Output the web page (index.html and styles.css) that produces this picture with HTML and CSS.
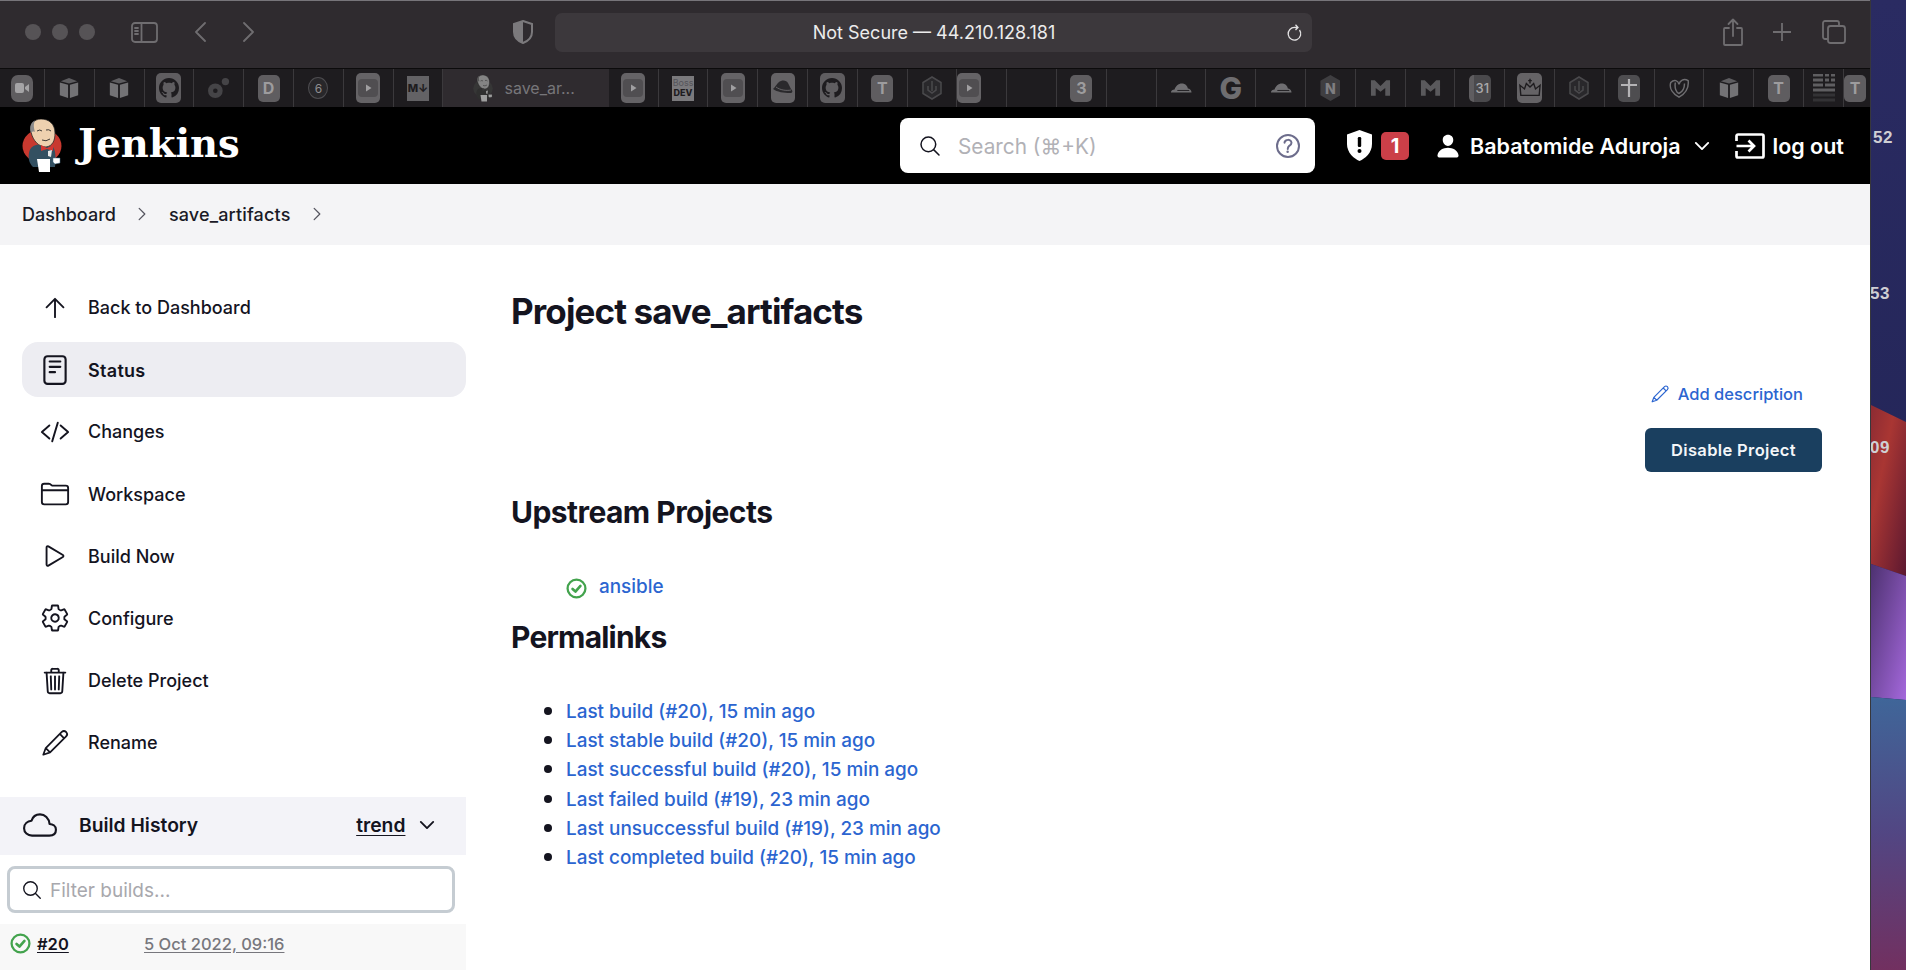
FILE: index.html
```html
<!DOCTYPE html>
<html lang="en">
<head>
<meta charset="utf-8">
<title>save_artifacts - Jenkins</title>
<link rel="stylesheet" href="styles.css">
</head>
<body>
<svg class="defs" width="0" height="0" aria-hidden="true">
  <defs>
    <symbol id="i-box" viewBox="0 0 24 24"><path d="M12 1 21 4.500 12 7 3 4.500z" fill="#5e5d60"/><path d="M2 6 11 8.500V23L2 20z" fill="#737275"/><path d="M22 6 13 8.500V23L22 20z" fill="#737275"/></symbol>
    <symbol id="i-gh" viewBox="0 0 16 16"><path fill="currentColor" d="M8 0C3.580 0 0 3.580 0 8c0 3.540 2.290 6.530 5.470 7.590.4.070.55-.17.55-.38 0-.19-.01-.82-.01-1.490-2.010.37-2.530-.49-2.690-.94-.09-.23-.48-.94-.82-1.130-.28-.15-.68-.52-.01-.53.63-.01 1.080.58 1.230.82.72 1.210 1.870.87 2.330.66.07-.52.28-.87.51-1.070-1.780-.2-3.640-.89-3.640-3.950 0-.87.31-1.590.82-2.150-.08-.2-.36-1.020.08-2.120 0 0 .67-.21 2.200.82.64-.18 1.320-.27 2-.27.68 0 1.360.09 2 .27 1.530-1.040 2.200-.82 2.200-.82.44 1.100.16 1.920.08 2.120.51.56.82 1.270.82 2.150 0 3.070-1.870 3.750-3.650 3.950.29.25.54.73.54 1.480 0 1.070-.01 1.930-.01 2.200 0 .21.15.46.55.38A8.013 8.013 0 0016 8c0-4.420-3.580-8-8-8z"/></symbol>
    <symbol id="i-yt" viewBox="0 0 24 30"><rect width="24" height="30" rx="5" fill="#656366"/><rect x="2" y="6" width="20" height="18" rx="4" fill="#504e51"/><path d="M10 11.500 15.500 15 10 18.500z" fill="#a09fa1"/></symbol>
    <symbol id="i-hex" viewBox="0 0 20 24"><path d="M10 1 19 6.500V17.500L10 23 1 17.500V6.500z" fill="#29282b" stroke="#4a494c" stroke-width="1.500"/><path d="M10 5V15M6 10V14L10 17 14 14V10" fill="none" stroke="#4a494c" stroke-width="1.500"/></symbol>
    <symbol id="i-cloudflare" viewBox="0 0 24 12"><path d="M1 11C1 8.500 3 7.500 5 7.500 6 4 9 1 13 1 16.500 1 19 3.500 19.500 6.500 21.500 6.500 23.500 8.500 23.500 11z" fill="#6f6e71"/><path d="M8 8.700H21" stroke="#1e1c1f" stroke-width="1"/></symbol>
    <symbol id="i-m" viewBox="0 0 22 18"><path d="M1 17V1H5L11 7 17 1H21V17H16V9L11 13 6 9V17z" fill="#5a595c"/></symbol>

    <symbol id="i-logo" viewBox="0 0 40 54">
      <ellipse cx="20" cy="27" rx="19.500" ry="17" fill="#c8392f"/>
      <path d="M7 34C8 27 14 25 19 26L30 27C34 30 34 40 33 48H11C7 44 6 39 7 34z" fill="#335061"/>
      <path d="M9 13C7 6 12 0 19 0 27 0 33 5 33 14 33 21 31 27 24 28 17 28 11 22 9 13z" fill="#eed1af" stroke="#2b2a28" stroke-width=".8"/>
      <path d="M9 14C7 8 9 3 13 1.500 11 6 12 9 13 13 11 12 10 13 9 14z" fill="#8b8b8b"/>
      <path d="M15 12Q18 10 20 12M24 11Q27 10 29 12M20 21Q24 23 28 20" fill="none" stroke="#2b2a28" stroke-width=".9"/>
      <path d="M19 26 25 29 31 26 31 32 25 30 19 32z" fill="#d33833"/>
      <path d="M26 32 30 31 29 38 26 37z" fill="#e8e8e8"/>
      <path d="M15 40H28L28 53H17z" fill="#fff"/>
      <path d="M31 39H38V44L33 45 31 43z" fill="#fff" stroke="#49728b" stroke-width=".5"/>
    </symbol>

    <symbol id="i-up" viewBox="0 0 512 512"><path d="M112 244l144-144 144 144M256 120v292" class="ln"/></symbol>
    <symbol id="i-reader" viewBox="0 0 512 512"><rect x="96" y="48" width="320" height="416" rx="48" ry="48" class="ln"/><path d="M176 128h160M176 208h160M176 288h80" class="ln"/></symbol>
    <symbol id="i-code" viewBox="0 0 512 512"><path d="M160 368L32 256l128-112M352 368l128-112-128-112M304 96l-96 320" class="ln"/></symbol>
    <symbol id="i-folder" viewBox="0 0 512 512"><path d="M440 432H72a40 40 0 01-40-40V120a40 40 0 0140-40h75.890a40 40 0 0122.190 6.720l27.840 18.560a40 40 0 0022.190 6.720H440a40 40 0 0140 40v240a40 40 0 01-40 40zM32 192h448" class="ln"/></symbol>
    <symbol id="i-play" viewBox="0 0 512 512"><path d="M112 111v290c0 17.440 17 28.520 31 20.160l247.900-148.370c12.120-7.250 12.120-26.330 0-33.580L143 90.840c-14-8.360-31 2.720-31 20.160z" class="ln"/></symbol>
    <symbol id="i-gear" viewBox="0 0 512 512"><path d="M262.290 192.310a64 64 0 1057.400 57.400 64.130 64.130 0 00-57.400-57.400zM416.390 256a154.340 154.340 0 01-1.530 20.790l45.210 35.460a10.810 10.810 0 012.450 13.750l-42.770 74a10.810 10.810 0 01-13.140 4.590l-44.900-18.080a16.110 16.110 0 00-15.170 1.750A164.480 164.480 0 01325 400.800a15.940 15.940 0 00-8.820 12.140l-6.730 47.890a11.080 11.080 0 01-10.680 9.170h-85.540a11.110 11.110 0 01-10.690-8.870l-6.720-47.820a16.070 16.070 0 00-9-12.220 155.300 155.300 0 01-21.460-12.570 16 16 0 00-15.110-1.710l-44.890 18.070a10.810 10.810 0 01-13.140-4.580l-42.770-74a10.800 10.800 0 012.450-13.750l38.210-30a16.050 16.050 0 006-14.080c-.36-4.170-.58-8.330-.58-12.500s.21-8.270.58-12.350a16 16 0 00-6.070-13.940l-38.190-30A10.810 10.810 0 0149.480 186l42.770-74a10.810 10.810 0 0113.140-4.590l44.900 18.080a16.110 16.110 0 0015.170-1.750A164.480 164.480 0 01187 111.200a15.940 15.940 0 008.820-12.140l6.730-47.890A11.080 11.080 0 01213.230 42h85.540a11.110 11.110 0 0110.690 8.870l6.720 47.820a16.070 16.070 0 009 12.220 155.300 155.300 0 0121.460 12.570 16 16 0 0015.110 1.710l44.890-18.070a10.810 10.810 0 0113.140 4.580l42.770 74a10.800 10.800 0 01-2.450 13.750l-38.210 30a16.050 16.050 0 00-6.050 14.080c.33 4.140.55 8.300.55 12.470z" class="ln"/></symbol>
    <symbol id="i-trash" viewBox="0 0 512 512"><path d="M112 112l20 320c.95 18.490 14.400 32 32 32h184c17.670 0 30.870-13.510 32-32l20-320M80 112h352M192 112V72h0a23.930 23.930 0 0124-24h80a23.930 23.930 0 0124 24h0v40M256 176v224M184 176l8 224M328 176l-8 224" class="ln"/></symbol>
    <symbol id="i-pencil" viewBox="0 0 512 512"><path d="M56 456 98 342 372 68Q408 34 446 68 482 106 446 142L172 416zM98 342 172 416M338 102 412 176" class="ln-thin"/></symbol>
    <symbol id="i-cloud" viewBox="0 0 512 512"><path d="M400 240c-8.890-89.540-71-144-144-144-69 0-113.440 48.200-128 96-60 6-112 43.590-112 112 0 66 54 112 120 112h260c55 0 100-27.440 100-88 0-59.820-53-85.760-96-88z" class="ln"/></symbol>
    <symbol id="i-chev" viewBox="0 0 512 512"><path d="M112 184l144 144 144-144" class="ln-bold"/></symbol>
    <symbol id="i-chev-r" viewBox="0 0 512 512"><path d="M184 112l144 144-144 144" class="ln"/></symbol>
    <symbol id="i-search" viewBox="0 0 512 512"><path d="M221.090 64a157.090 157.090 0 10157.090 157.090A157.100 157.100 0 00221.090 64zM338.290 338.290L448 448" class="ln"/></symbol>
    <symbol id="i-help" viewBox="0 0 512 512"><path d="M256 80a176 176 0 10176 176A176 176 0 00256 80zM200 202.290s.84-17.500 19.570-32.570C230.680 160.770 244 158.180 256 158c10.930-.14 20.690 1.670 26.530 4.450 10 4.760 29.470 16.380 29.470 41.090 0 26-17 37.810-36.370 50.800S252 287.640 252 304" class="ln"/><circle cx="250" cy="348" r="20" fill="currentColor"/></symbol>
    <symbol id="i-person" viewBox="0 0 512 512"><path fill="currentColor" d="M332.640 64.580C313.180 43.570 286 32 256 32c-30.160 0-57.430 11.500-76.800 32.380-19.580 21.110-29.120 49.800-26.880 80.780C156.760 206.280 203.270 256 256 256s99.160-49.710 103.670-110.820c2.270-30.700-7.330-59.330-27.030-80.600zM432 480H80a31 31 0 01-24.200-11.130c-6.500-7.770-9.120-18.380-7.180-29.110C57.060 392.940 83.400 353.610 124.800 326c36.780-24.510 83.370-38 131.200-38s94.420 13.500 131.200 38c41.400 27.600 67.740 66.930 76.180 113.750 1.940 10.730-.68 21.340-7.180 29.110A31 31 0 01432 480z"/></symbol>
    <symbol id="i-check" viewBox="0 0 24 24"><circle cx="12" cy="12" r="10.200" fill="none" stroke="currentColor" stroke-width="2.600"/><path d="M7.500 12.500 10.800 15.500 16.500 9" fill="none" stroke="currentColor" stroke-width="3" stroke-linecap="round" stroke-linejoin="round"/></symbol>
  </defs>
</svg>

<div class="desktop">
  <div class="window">
    <div class="titlebar">
      <div class="lights"><span class="light"></span><span class="light"></span><span class="light"></span></div>
      <svg class="tb-sidebar" viewBox="0 0 27 21"><rect x="1" y="1" width="25" height="19" rx="3" class="tb-ln"/><path d="M10.500 1V20M4 6H7M4 9H7M4 12H7" class="tb-ln"/></svg>
      <svg class="tb-back" viewBox="0 0 12 20"><path d="M11 1 2 10 11 19" class="tb-ln"/></svg>
      <svg class="tb-forward" viewBox="0 0 12 20"><path d="M1 1 10 10 1 19" class="tb-ln"/></svg>
      <svg class="tb-shield" viewBox="0 0 20 24"><path d="M10 1 19 4V12C19 18 14 21.500 10 23 6 21.500 1 18 1 12V4z" fill="none" stroke="#7b797c" stroke-width="2"/><path d="M10 1 1 4V12C1 18 6 21.500 10 23z" fill="#7b797c"/></svg>
      <div class="urlbar">
        <span class="url-text">Not Secure — 44.210.128.181</span>
        <svg class="url-reload" viewBox="0 0 16 18"><path d="M12.500 6A6.300 6.300 0 1 1 8 3.500H10.500M8.500 .8 11 3.500 8.500 6" fill="none" stroke="#e2e1e2" stroke-width="1.300"/></svg>
      </div>
      <div class="tb-actions">
        <svg class="tb-share" viewBox="0 0 20 28"><path d="M6 10H2A1 1 0 0 0 1 11V26A1 1 0 0 0 2 27H18A1 1 0 0 0 19 26V11A1 1 0 0 0 18 10H14M10 18V1.500M5.500 6 10 1.500 14.500 6" class="tb-ln"/></svg>
        <svg class="tb-plus" viewBox="0 0 18 18"><path d="M9 0V18M0 9H18" class="tb-ln"/></svg>
        <svg class="tb-tabs" viewBox="0 0 24 24"><path d="M5 19H3A2 2 0 0 1 1 17V3A2 2 0 0 1 3 1H15A2 2 0 0 1 17 3V5" class="tb-ln"/><rect x="6" y="6" width="17" height="17" rx="2.500" class="tb-ln"/></svg>
      </div>
    </div>

    <div class="tabbar">
      <div class="tab tab-first"><span class="fav fav-zoom"><svg viewBox="0 0 14 10" class="fav-cam"><rect width="9" height="10" rx="2" fill="#a5a4a6"/><path d="M10 4 14 1V9L10 6z" fill="#a5a4a6"/></svg></span></div>
      <div class="tab"><svg class="ico-24"><use href="#i-box"/></svg></div>
      <div class="tab"><svg class="ico-24"><use href="#i-box"/></svg></div>
      <div class="tab"><span class="fav fav-gh"><svg class="ico-gh"><use href="#i-gh"/></svg></span></div>
      <div class="tab"><svg class="ico-24" viewBox="0 0 24 24"><circle cx="8" cy="15" r="8" fill="#454447"/><circle cx="8" cy="15" r="2.500" fill="#1e1c1f"/><circle cx="19" cy="5" r="4" fill="#454447"/></svg></div>
      <div class="tab"><span class="fav fav-letter">D</span></div>
      <div class="tab"><span class="fav-ring">6</span></div>
      <div class="tab"><svg class="ico-yt"><use href="#i-yt"/></svg></div>
      <div class="tab"><span class="fav-md">M↓</span></div>
      <div class="tab tab-active"><svg class="ico-logo-tab"><use href="#i-logo"/></svg><span class="tab-title">save_ar...</span></div>
      <div class="tab"><svg class="ico-yt"><use href="#i-yt"/></svg></div>
      <div class="tab"><span class="fav-dev"><span class="dev-top">Boss</span><span class="dev-bot">DEV</span></span></div>
      <div class="tab"><svg class="ico-yt"><use href="#i-yt"/></svg></div>
      <div class="tab"><svg class="ico-yt" viewBox="0 0 24 30"><rect width="24" height="30" rx="5" fill="#656366"/><path d="M2 16C5 14 6 9 10 8 13 7 16 8 17 10L20 16C22 18 22 20 19 20 13 20 6 19 2 16z" fill="#2a292c"/><path d="M5 14C9 17 15 18 20 17" fill="none" stroke="#656366" stroke-width="1"/></svg></div>
      <div class="tab"><span class="fav fav-gh"><svg class="ico-gh"><use href="#i-gh"/></svg></span></div>
      <div class="tab"><span class="fav fav-letter">T</span></div>
      <div class="tab"><svg class="ico-hex"><use href="#i-hex"/></svg></div>
      <div class="tab tab-left"><svg class="ico-yt"><use href="#i-yt"/></svg></div>
      <div class="tab"></div>
      <div class="tab"><span class="fav fav-letter">3</span></div>
      <div class="tab"></div>
      <div class="tab"><svg class="ico-cf"><use href="#i-cloudflare"/></svg></div>
      <div class="tab"><span class="fav-g">G</span></div>
      <div class="tab"><svg class="ico-cf"><use href="#i-cloudflare"/></svg></div>
      <div class="tab"><span class="fav-n">N</span></div>
      <div class="tab"><svg class="ico-m"><use href="#i-m"/></svg></div>
      <div class="tab"><svg class="ico-m"><use href="#i-m"/></svg></div>
      <div class="tab"><span class="fav fav-cal">31</span></div>
      <div class="tab"><span class="fav-crown"><svg viewBox="0 0 24 20" class="crown"><path d="M2 18 1 7 6 11 8 5 12 9 16 5 18 11 23 7 22 18zM12 0V5M10 2H14" fill="none" stroke="#1e1c1f" stroke-width="1.500"/></svg></span></div>
      <div class="tab"><svg class="ico-hex"><use href="#i-hex"/></svg></div>
      <div class="tab"><span class="fav fav-cross"><svg viewBox="0 0 16 18" class="cross"><path d="M0 6H16M8 0V18" stroke="#b5b4b6" stroke-width="2.200"/></svg></span></div>
      <div class="tab"><svg class="ico-24" viewBox="0 0 24 24"><path d="M12 22C5 18 1 12 3 6 7 2 11 4 12 8 13 4 17 1 22 4 23 12 19 18 12 22zM8 6C7 12 9 17 12 18 16 16 18 11 18 7" fill="none" stroke="#6f6e71" stroke-width="1.600"/></svg></div>
      <div class="tab"><svg class="ico-24"><use href="#i-box"/></svg></div>
      <div class="tab"><span class="fav fav-letter">T</span></div>
      <div class="tab tab-grid"><svg class="ico-grid" viewBox="0 0 22 28"><path d="M0 1H10M12 1H16M18 1H22M0 6H10M12 6H16M18 6H22M0 11H10M12 11H22M0 16H22" stroke="#5f5e61" stroke-width="3"/><path d="M0 21H22M0 26H22" stroke="#333235" stroke-width="3"/></svg></div>
      <div class="tab tab-last"><span class="fav fav-letter">T</span></div>
    </div>

    <header class="jheader">
      <div class="brand">
        <svg class="brand-logo"><use href="#i-logo"/></svg>
        <span class="brand-name">Jenkins</span>
      </div>
      <div class="searchbox">
        <svg class="search-ico"><use href="#i-search"/></svg>
        <span class="search-ph">Search (⌘+K)</span>
        <svg class="help-ico"><use href="#i-help"/></svg>
      </div>
      <div class="alerts">
        <svg class="alert-shield" viewBox="0 0 25 31"><path fill="#fff" d="M12.500 0 25 4.500V14C25 23 18 28.500 12.500 31 7 28.500 0 23 0 14V4.500z"/><rect x="10.800" y="7" width="3.400" height="10" rx="1.200" fill="#000"/><circle cx="12.500" cy="21" r="2" fill="#000"/></svg>
        <span class="alert-badge">1</span>
      </div>
      <div class="userbox">
        <svg class="user-ico"><use href="#i-person"/></svg>
        <span class="user-name">Babatomide Aduroja</span>
        <svg class="user-chev"><use href="#i-chev"/></svg>
      </div>
      <div class="logout">
        <svg class="logout-ico" viewBox="0 0 30 26"><path d="M1.500 8V3A1.500 1.500 0 0 1 3 1.500H27A1.500 1.500 0 0 1 28.500 3V23A1.500 1.500 0 0 1 27 24.500H3A1.500 1.500 0 0 1 1.500 23V18M1.500 13H19M13.500 7.500 19 13 13.500 18.500" fill="none" stroke="#fff" stroke-width="2.700"/></svg>
        <span class="logout-text">log out</span>
      </div>
    </header>

    <nav class="breadcrumb">
      <span class="crumb">Dashboard</span>
      <svg class="crumb-sep"><use href="#i-chev-r"/></svg>
      <span class="crumb crumb-job">save_artifacts</span>
      <svg class="crumb-sep"><use href="#i-chev-r"/></svg>
    </nav>

    <div class="page">
      <aside class="side">
        <ul class="tasks">
          <li class="task"><svg class="task-ico"><use href="#i-up"/></svg><span>Back to Dashboard</span></li>
          <li class="task task-on"><svg class="task-ico task-ico-doc"><use href="#i-reader"/></svg><span class="task-label-on">Status</span></li>
          <li class="task"><svg class="task-ico"><use href="#i-code"/></svg><span>Changes</span></li>
          <li class="task"><svg class="task-ico"><use href="#i-folder"/></svg><span>Workspace</span></li>
          <li class="task"><svg class="task-ico"><use href="#i-play"/></svg><span>Build Now</span></li>
          <li class="task"><svg class="task-ico"><use href="#i-gear"/></svg><span>Configure</span></li>
          <li class="task"><svg class="task-ico"><use href="#i-trash"/></svg><span>Delete Project</span></li>
          <li class="task"><svg class="task-ico"><use href="#i-pencil"/></svg><span>Rename</span></li>
        </ul>
        <div class="bh-head">
          <svg class="bh-cloud"><use href="#i-cloud"/></svg>
          <span class="bh-title">Build History</span>
          <span class="bh-trend">trend</span>
          <svg class="bh-chev"><use href="#i-chev"/></svg>
        </div>
        <div class="bh-filter">
          <svg class="bh-search"><use href="#i-search"/></svg>
          <span class="bh-ph">Filter builds...</span>
        </div>
        <div class="bh-row">
          <svg class="bh-ok"><use href="#i-check"/></svg>
          <span class="bh-num">#20</span>
          <span class="bh-date">5 Oct 2022, 09:16</span>
        </div>
      </aside>

      <main class="main">
        <h1 class="title">Project save_artifacts</h1>
        <div class="actions">
          <a class="add-desc"><svg class="add-ico"><use href="#i-pencil"/></svg>Add description</a>
          <button class="btn-disable">Disable Project</button>
        </div>
        <h2 class="sub sub-up">Upstream Projects</h2>
        <div class="upstream"><svg class="up-ok"><use href="#i-check"/></svg><a class="link">ansible</a></div>
        <h2 class="sub sub-perma">Permalinks</h2>
        <ul class="permalinks">
          <li><a class="link">Last build (#20), 15 min ago</a></li>
          <li><a class="link">Last stable build (#20), 15 min ago</a></li>
          <li><a class="link">Last successful build (#20), 15 min ago</a></li>
          <li><a class="link">Last failed build (#19), 23 min ago</a></li>
          <li><a class="link">Last unsuccessful build (#19), 23 min ago</a></li>
          <li><a class="link">Last completed build (#20), 15 min ago</a></li>
        </ul>
      </main>
    </div>
  </div>

  <div class="wallpaper">
    <svg class="wall-art" viewBox="0 0 36 970" preserveAspectRatio="none">
      <defs>
        <linearGradient id="w-navy" x1="0" y1="0" x2="0" y2="1"><stop offset="0" stop-color="#2a2b62"/><stop offset="1" stop-color="#1e2150"/></linearGradient>
        <linearGradient id="w-red" x1="0" y1="0" x2="1" y2="1"><stop offset="0" stop-color="#8c2b33"/><stop offset=".35" stop-color="#a93633"/><stop offset="1" stop-color="#5c1830"/></linearGradient>
        <linearGradient id="w-purple" x1="0" y1="0" x2="1" y2="1"><stop offset="0" stop-color="#4d3170"/><stop offset="1" stop-color="#a468dc"/></linearGradient>
        <linearGradient id="w-blue" x1="0" y1="0" x2="0" y2="1"><stop offset="0" stop-color="#3f6699"/><stop offset=".5" stop-color="#524683"/><stop offset="1" stop-color="#723060"/></linearGradient>
      </defs>
      <rect width="36" height="970" fill="url(#w-navy)"/>
      <path d="M0 405 36 422V576L0 564z" fill="url(#w-red)"/>
      <path d="M0 564 36 576V700L0 697z" fill="url(#w-purple)"/>
      <path d="M0 697 36 700V970H0z" fill="url(#w-blue)"/>
    </svg>
    <span class="wall-num wall-52">52</span>
    <span class="wall-num wall-53">53</span>
    <span class="wall-num wall-09">09</span>
  </div>
</div>
</body>
</html>
```

FILE: styles.css
```css
* { box-sizing: border-box; }
html, body { margin: 0; padding: 0; height: 100%; overflow: hidden; }
body { font-family: Inter, "Liberation Sans", sans-serif; background: #1e2150; color: #14141f; }
.defs { display: block; height: 0; width: 0; }
.ln { fill: none; stroke: currentColor; stroke-width: 32; stroke-linecap: round; stroke-linejoin: round; }
.ln-thin { fill: none; stroke: currentColor; stroke-width: 30; stroke-linecap: round; stroke-linejoin: round; }
.ln-bold { fill: none; stroke: currentColor; stroke-width: 44; stroke-linecap: round; stroke-linejoin: round; }
.tb-ln { fill: none; stroke: #6f6d70; stroke-width: 1.800; stroke-linecap: round; stroke-linejoin: round; }
ul { list-style: none; margin: 0; padding: 0; }

.desktop { display: flex; width: 1906px; height: 970px; overflow: hidden; }
.window { flex: 0 0 1871px; height: 970px; background: #fff; border-right: 1px solid #37373c; display: flex; flex-direction: column; overflow: hidden; }

/* title bar */
.titlebar { flex: 0 0 68px; background: #2f2b2f; border-top: 1px solid #77757a; display: flex; align-items: center; padding: 0 0 5px 25px; position: relative; }
.lights { display: flex; gap: 11px; }
.light { width: 16px; height: 16px; border-radius: 50%; background: #565356; }
.tb-sidebar { width: 27px; height: 21px; margin-left: 36px; }
.tb-back { width: 12px; height: 20px; margin-left: 36px; }
.tb-forward { width: 12px; height: 20px; margin-left: 37px; }
.tb-shield { width: 20px; height: 24px; margin-left: 258px; }
.urlbar { width: 757px; height: 39px; margin-left: 22px; background: #3c383c; border-radius: 7px; display: flex; align-items: center; justify-content: center; position: relative; }
.url-text { font-size: 18px; color: #ececec; padding: 1px 0 0 1px; }
.url-reload { position: absolute; right: 9px; top: 11px; width: 16px; height: 18px; }
.tb-actions { display: flex; align-items: center; margin-left: 411px; }
.tb-share { width: 20px; height: 28px; }
.tb-plus { width: 18px; height: 18px; margin-left: 30px; }
.tb-tabs { width: 24px; height: 24px; margin-left: 31px; }

/* tab bar */
.tabbar { flex: 0 0 39px; display: flex; background: #1e1c1f; border-top: 1px solid #0c0b0c; overflow: hidden; }
.tab { flex: 0 0 49.800px; display: flex; align-items: center; justify-content: center; border-right: 1.500px solid #3b393c; }
.tab-first { flex-basis: 45px; }
.tab-left { justify-content: flex-start; }
.tab-grid { flex-basis: 40px; }
.tab-last { flex-basis: 25px; border-right: 0; justify-content: flex-start; }
.tab-active { flex-basis: 165.500px; background: #2f2b2f; gap: 11px; border-right: 0; padding-right: 4px; }
.ico-logo-tab { width: 20px; height: 27px; filter: grayscale(1) brightness(.62); }
.tab-title { font-size: 16px; color: #77767a; }
.fav { width: 22px; height: 27px; border-radius: 5px; background: #5f5d60; color: #9d9c9e; font-size: 16px; font-weight: 700; display: flex; align-items: center; justify-content: center; }
.fav-zoom { width: 22px; height: 27px; border-radius: 7px; }
.fav-cam { width: 14px; height: 10px; }
.fav-gh { width: 25px; height: 30px; color: #1e1c1f; }
.ico-gh { width: 20px; height: 24px; }
.ico-24 { width: 22px; height: 24px; }
.ico-yt { width: 24px; height: 30px; }
.ico-hex { width: 20px; height: 26px; }
.ico-cf { width: 22px; height: 12px; }
.ico-m { width: 21px; height: 18px; }
.ico-grid { width: 22px; height: 28px; }
.fav-ring { width: 20px; height: 22px; border-radius: 50%; border: 1px solid #4e4d50; background: #28272a; color: #8f8e90; font-size: 12px; display: flex; align-items: center; justify-content: center; }
.fav-md { width: 22px; height: 25px; background: #636265; color: #1e1c1f; font-size: 11px; font-weight: 800; display: flex; align-items: center; justify-content: center; }
.fav-dev { width: 22px; height: 25px; background: #7a797c; color: #1e1c1f; font-size: 9px; font-weight: 800; line-height: 10px; display: flex; flex-direction: column; align-items: center; justify-content: center; }
.dev-top { font-weight: 400; color: #55545a; }
.fav-g { color: #6e6d70; font-size: 30px; font-weight: 800; line-height: 1; }
.fav-n { width: 20px; height: 26px; background: #3f3e41; color: #7f7e81; font-size: 14px; font-weight: 800; display: flex; align-items: center; justify-content: center; clip-path: polygon(50% 0, 100% 22%, 100% 78%, 50% 100%, 0 78%, 0 22%); }
.fav-cal { font-size: 13px; font-weight: 500; color: #aaa9ab; background: #4a494c; border-left: 5px solid #5f5d60; }
.fav-crown { width: 25px; height: 30px; border-radius: 5px; background: #656366; display: flex; align-items: center; justify-content: center; }
.crown { width: 22px; height: 20px; }
.fav-cross { background: #4e4d50; }
.cross { width: 16px; height: 18px; }

/* Jenkins header */
.jheader { flex: 0 0 77px; background: #000; color: #fff; display: flex; align-items: center; padding-left: 22px; }
.brand { display: flex; align-items: center; gap: 16px; width: 878px; }
.brand-logo { width: 40px; height: 54px; }
.brand-name { font-family: "DejaVu Serif", "Liberation Serif", serif; font-weight: 700; font-size: 38.500px; line-height: 1; margin-top: -2px; color: #fff; }
.searchbox { width: 415px; height: 55px; background: #fff; border-radius: 8px; display: flex; align-items: center; padding: 0 11px 0 18px; color: #14141f; }
.search-ico { width: 24px; height: 24px; }
.search-ph { flex: 1; margin-left: 16px; padding-top: 2px; color: #b1b1b6; font-size: 20.800px; }
.help-ico { width: 32px; height: 32px; color: #6d6d8c; }
.alerts { display: flex; align-items: center; gap: 9px; margin-left: 32px; }
.alert-shield { width: 25px; height: 31px; }
.alert-badge { width: 28px; height: 28px; background: #cb3f48; border-radius: 5px; color: #fff; font-size: 20px; font-weight: 700; display: flex; align-items: center; justify-content: center; }
.userbox { display: flex; align-items: center; margin-left: 26px; }
.user-ico { width: 26px; height: 26px; color: #fff; }
.user-name { margin-left: 9px; font-size: 21.500px; font-weight: 600; white-space: nowrap; }
.user-chev { width: 22px; height: 22px; margin-left: 10px; color: #fff; }
.logout { display: flex; align-items: center; margin-left: 22px; }
.logout-ico { width: 30px; height: 26px; }
.logout-text { margin-left: 8px; font-size: 21.500px; font-weight: 600; }

/* breadcrumb */
.breadcrumb { flex: 0 0 61px; background: #f4f4f6; display: flex; align-items: center; padding-left: 22px; font-size: 18px; padding-bottom: 1px; }
.crumb { font-weight: 500; color: #1a1a26; }
.crumb-job { letter-spacing: .15px; }
.crumb-sep { width: 20px; height: 20px; margin: 0 16.500px; color: #55555f; }

/* page */
.page { flex: 1; display: flex; min-height: 0; }
.side { flex: 0 0 466px; }
.tasks { display: flex; flex-direction: column; gap: 7.200px; padding: 35px 0 0 22px; }
.task { height: 55px; display: flex; align-items: center; gap: 18px; padding-left: 18px; border-radius: 16px; font-size: 18px; font-weight: 500; color: #14141f; }
.task-on { background: #ededf2; padding-top: 1px; }
.task-label-on { font-weight: 600; letter-spacing: .3px; }
.task-ico { width: 30px; height: 30px; flex: none; color: #14141f; }
.task-ico-doc { width: 34px; height: 34px; margin: 0 -2px; }

.bh-head { height: 58px; margin-top: 27px; background: #f3f3f8; display: flex; align-items: center; padding: 0 0 2px 23px; font-size: 19.300px; font-weight: 600; }
.bh-cloud { width: 34px; height: 34px; }
.bh-title { margin-left: 22px; }
.bh-trend { margin-left: 158px; text-decoration: underline; text-underline-offset: 3px; }
.bh-chev { width: 22px; height: 22px; margin-left: 11px; }
.bh-filter { width: 448px; height: 47px; margin: 11px 0 0 7px; border: 3px solid #c5ccd2; border-radius: 8px; display: flex; align-items: center; padding: 1px 0 0 11px; }
.bh-search { width: 22px; height: 22px; }
.bh-ph { margin-left: 7px; font-size: 19px; color: #a8a8ad; }
.bh-row { height: 46px; margin-top: 11px; background: #f8f8f8; display: flex; align-items: center; padding: 0 0 7px 10px; }
.bh-ok { width: 21px; height: 21px; color: #43a34d; }
.bh-num { margin-left: 6px; font-size: 16.500px; font-weight: 600; text-decoration: underline; text-underline-offset: 2px; width: 107px; }
.bh-date { font-size: 16.500px; font-weight: 500; color: #77777d; text-decoration: underline; text-underline-offset: 2px; }

/* main */
.main { flex: 1; min-width: 0; padding-left: 45px; }
.title { margin: 0; padding-top: 46px; font-size: 35px; line-height: 40px; font-weight: 700; letter-spacing: -.87px; color: #14141f; }
.actions { display: flex; flex-direction: column; align-items: flex-end; padding-right: 48px; margin-top: 51px; }
.add-desc { display: flex; align-items: center; gap: 8px; height: 24px; margin-right: 19px; color: #2b65d0; font-size: 16.500px; font-weight: 500; }
.add-ico { width: 20px; height: 20px; }
.btn-disable { width: 177px; height: 44px; margin-top: 22px; background: #1a3f5f; color: #f4f6f8; border: 0; border-radius: 6px; font: 600 16.500px Inter, sans-serif; letter-spacing: .35px; }
.sub { margin: 0; font-size: 30px; line-height: 36px; font-weight: 700; letter-spacing: -.55px; color: #14141f; }
.sub-up { margin-top: 22px; }
.upstream { display: flex; align-items: center; height: 26px; margin: 43px 0 1px 55px; }
.up-ok { width: 21px; height: 21px; color: #43a34d; margin-top: 4px; }
.link { color: #2b65d0; font-size: 18.900px; font-weight: 500; }
.upstream .link { margin-left: 12px; }
.sub-perma { margin-top: 20px; letter-spacing: -.8px; }
.permalinks { margin-top: 40px; padding-left: 55px; list-style: disc; }
.permalinks li { height: 29.200px; line-height: 29.200px; }
.permalinks li::marker { font-size: 24px; }

/* desktop wallpaper */
.wallpaper { flex: 1; position: relative; overflow: hidden; }
.wall-art { display: block; width: 100%; height: 970px; }
.wall-num { position: absolute; font-family: "Liberation Sans", sans-serif; font-weight: 700; font-size: 17px; color: #cfcfd4; letter-spacing: .6px; }
.wall-52 { top: 128px; left: 2px; }
.wall-53 { top: 284px; left: -1px; }
.wall-09 { top: 438px; left: -1px; }
```
